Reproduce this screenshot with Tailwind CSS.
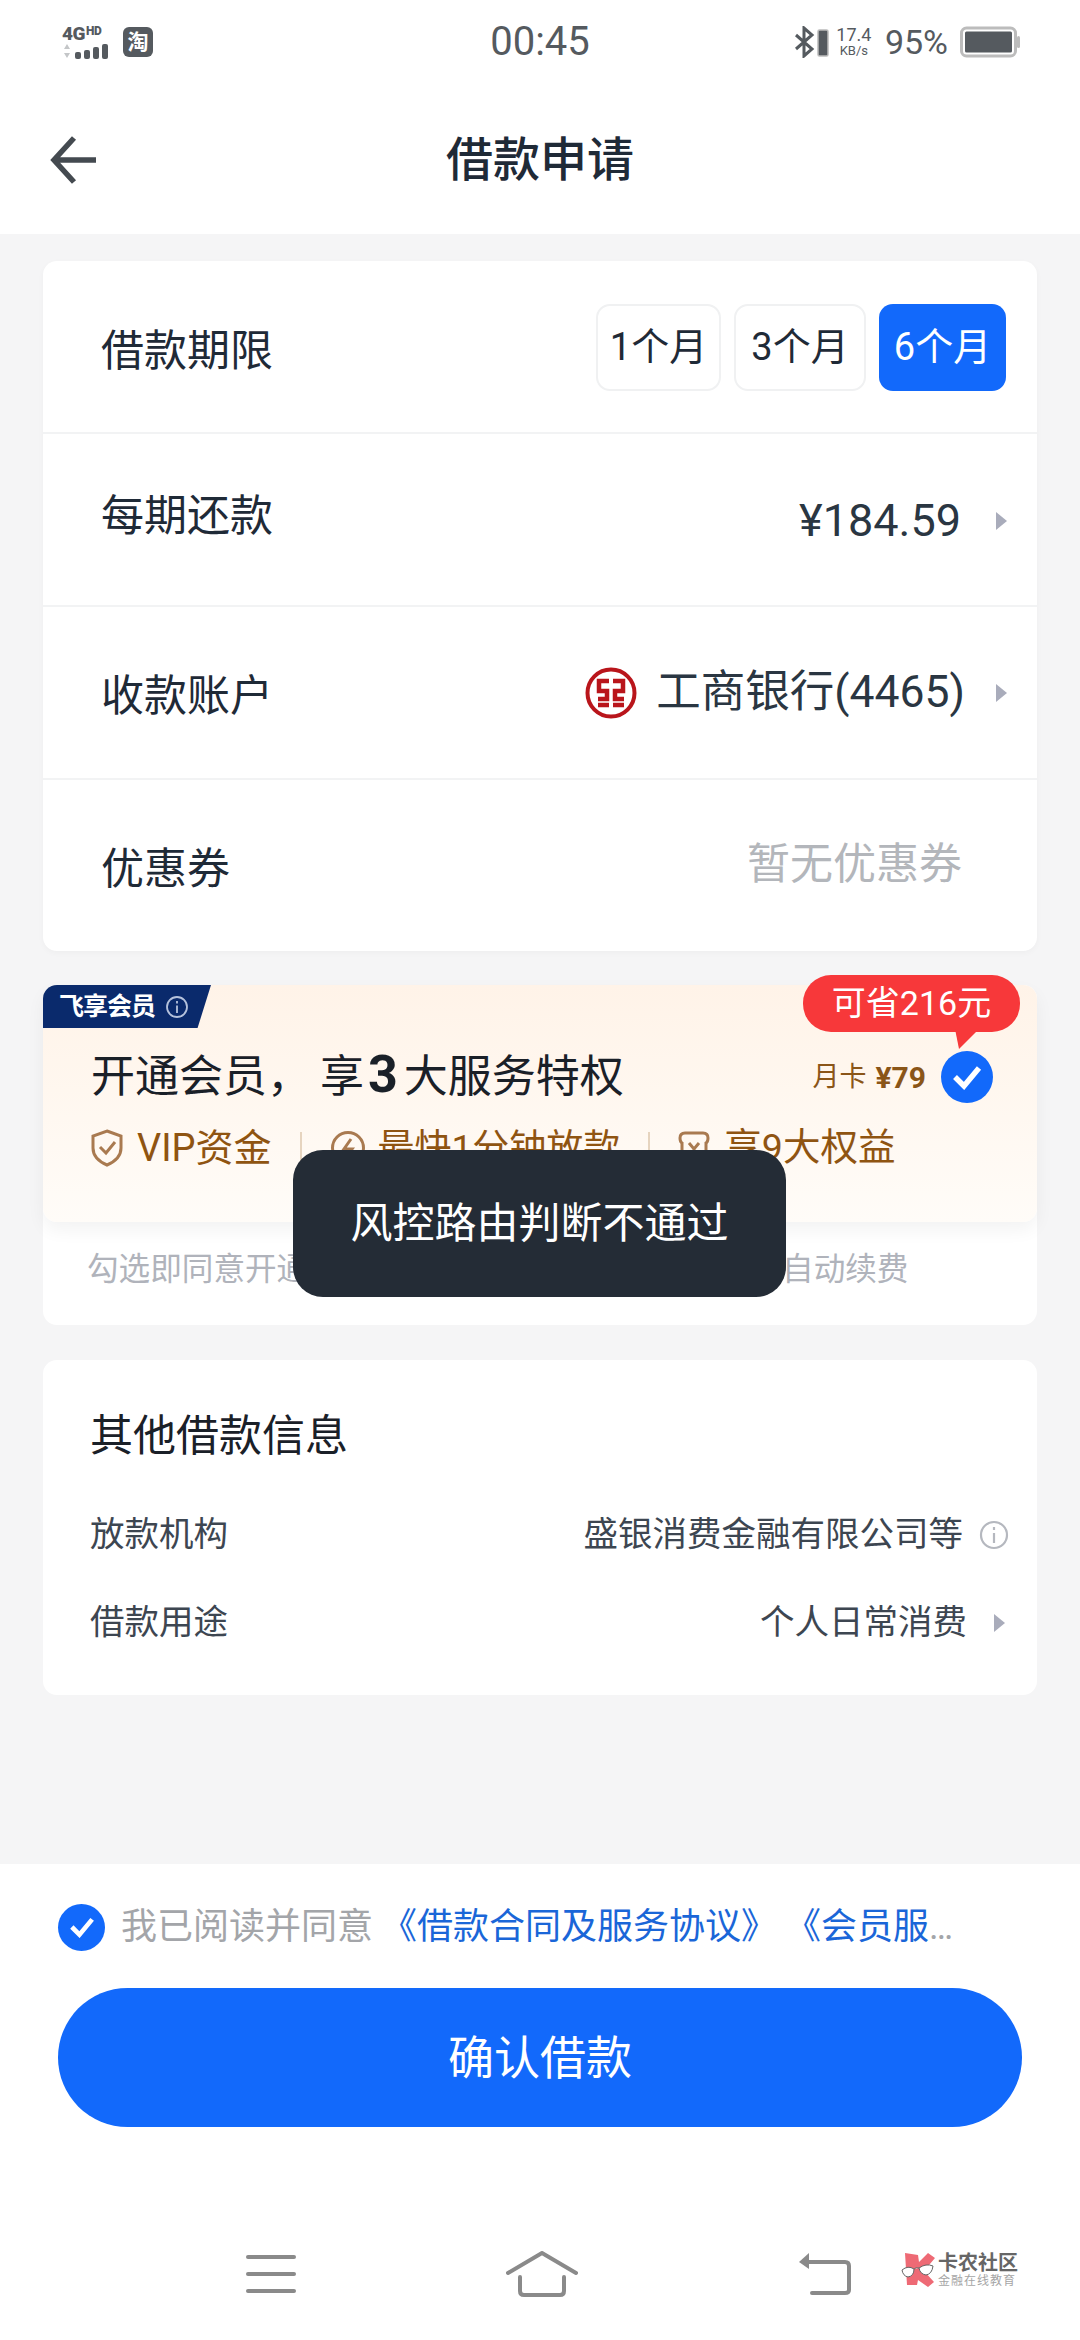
<!DOCTYPE html>
<html lang="zh-CN">
<head>
    <meta charset="UTF-8">
    <meta name="viewport" content="width=device-width, initial-scale=1.0">
    <title>借款申请</title>
    <script src="https://cdn.jsdelivr.net/npm/@tailwindcss/browser@4"></script>
</head>
<body class="bg-[#f5f5f6] font-['Roboto','Noto_Sans_CJK_SC',sans-serif]">
<div class="relative w-[1080px] h-[2340px] overflow-hidden flex flex-col">

    <!-- status bar -->
    <div class="h-[80px] bg-white relative flex items-center justify-between pl-[62px] pr-[58px] pt-[3px] text-[#555a5f] shrink-0">
        <div class="flex items-center gap-[11px]">
            <div class="w-[50px] flex flex-col leading-none">
                <span class="text-[19px] font-black tracking-[-0.5px] leading-[17px]">4G<span class="text-[12px] align-top leading-[12px] ml-[1px]">HD</span></span>
                <svg width="50" height="16" viewBox="0 0 50 16" class="mt-[1px]">
                    <path d="M2 6 L5 1 L8 6Z M2 10 L8 10 L5 15Z" fill="#c4c6c8"/>
                    <rect x="13" y="9" width="6" height="7" rx="2" fill="#555a5f"/>
                    <rect x="22" y="7" width="6" height="9" rx="2" fill="#555a5f"/>
                    <rect x="31" y="4" width="6" height="12" rx="2" fill="#555a5f"/>
                    <rect x="40" y="1" width="6" height="15" rx="2" fill="#555a5f"/>
                </svg>
            </div>
            <div class="w-[30px] h-[30px] rounded-[6px] bg-[#555a5f] text-white text-[21px] font-bold leading-[30px] text-center">淘</div>
        </div>
        <div class="absolute left-[480px] top-[20px] text-[40px] leading-[44px] w-[120px] text-center">00:45</div>
        <div class="flex items-center">
            <svg width="22" height="32" viewBox="0 0 22 32" fill="none" stroke="#555a5f" stroke-width="3"><path d="M2 9 L18 23 L10 30 V2 L18 9 L2 23"/></svg>
            <svg width="12" height="30" viewBox="0 0 12 30" class="ml-[1px]"><rect x="1" y="3" width="10" height="26" rx="1.5" fill="#555a5f" stroke="#bbb" stroke-width="1.5"/></svg>
            <div class="ml-[6px] w-[38px] text-[15px] leading-[15px] text-center"><div class="text-[18px] leading-[18px]">17.4</div><div class="text-[13px] leading-[14px]">KB/s</div></div>
            <span class="ml-[12px] text-[34px] leading-none">95%</span>
            <svg width="62" height="32" viewBox="0 0 62 32" class="ml-[12px]">
                <rect x="1.5" y="2" width="54" height="28" rx="5" fill="none" stroke="#bcbcbc" stroke-width="3"/>
                <rect x="5" y="5.5" width="47" height="21" rx="1.5" fill="#555a5f"/>
                <rect x="57" y="10" width="3" height="12" rx="1.5" fill="#bcbcbc"/>
            </svg>
        </div>
    </div>

    <!-- header -->
    <div class="h-[154px] bg-white relative flex items-center justify-center shrink-0 pt-[4px]">
        <svg width="48" height="48" viewBox="0 0 48 48" fill="none" stroke="#444a50" stroke-width="5.5" class="absolute left-[50px] top-[56px]">
            <path d="M46 24 H4 M24 2 L4 24 L24 46"/>
        </svg>
        <h1 class="text-[47px] font-medium text-[#1f2a37] leading-none">借款申请</h1>
    </div>

    <main class="px-[43px] pt-[27px] flex-1 flex flex-col">
        <!-- loan card -->
        <section class="bg-white rounded-[14px] h-[690px] flex flex-col shadow-[0_2px_6px_rgba(0,0,0,0.03)]">
            <div class="h-[173px] flex items-center justify-between pl-[58px] pr-[31px] border-b-2 border-[#f2f3f4]">
                <span class="text-[43px] text-[#1f2a37] pt-[10px]">借款期限</span>
                <div class="flex gap-[13px] pt-[2px]">
                    <div class="w-[125px] h-[87px] rounded-[14px] border-2 border-[#f0f1f2] text-[38px] text-[#1f2a37] flex items-center justify-center">1个月</div>
                    <div class="w-[132px] h-[87px] rounded-[14px] border-2 border-[#f0f1f2] text-[38px] text-[#1f2a37] flex items-center justify-center">3个月</div>
                    <div class="w-[127px] h-[87px] rounded-[14px] bg-[#1269fb] text-[38px] text-white flex items-center justify-center">6个月</div>
                </div>
            </div>
            <div class="h-[173px] flex items-center justify-between pl-[58px] pr-[30px] border-b-2 border-[#f2f3f4]">
                <span class="text-[43px] text-[#1f2a37] pb-[6px]">每期还款</span>
                <div class="flex items-center pt-[2px]">
                    <span class="text-[45px] text-[#2a3642]">¥184.59</span>
                    <svg width="12" height="18" viewBox="0 0 12 18" class="ml-[34px]"><path d="M1 0 L12 9 L1 18Z" fill="#a9acbb"/></svg>
                </div>
            </div>
            <div class="h-[173px] flex items-center justify-between pl-[58px] pr-[30px] border-b-2 border-[#f2f3f4]">
                <span class="text-[43px] text-[#1f2a37] pt-[8px]">收款账户</span>
                <div class="flex items-center">
                    <svg width="52" height="52" viewBox="0 0 52 52" class="mr-[19px]" fill="none" stroke="#b9151b">
                        <circle cx="26" cy="26" r="23.5" stroke-width="4"/>
                        <path d="M24 14 H14 V24 H22 V32 H13 M13 38 H24 M28 14 H38 V24 H30 V32 H39 M39 38 H28" stroke-width="4.5"/>
                    </svg>
                    <span class="text-[44.5px] text-[#2a3642]">工商银行(4465)</span>
                    <svg width="12" height="18" viewBox="0 0 12 18" class="ml-[30px]"><path d="M1 0 L12 9 L1 18Z" fill="#a9acbb"/></svg>
                </div>
            </div>
            <div class="flex-1 flex items-center justify-between pl-[58px] pr-[75px]">
                <span class="text-[43px] text-[#1f2a37] pt-[8px]">优惠券</span>
                <span class="text-[43px] text-[#b3b6bb] pb-[2px]">暂无优惠券</span>
            </div>
        </section>

        <!-- membership card -->
        <section class="mt-[34px] bg-white rounded-[14px] h-[340px] relative">
            <div class="h-[237px] rounded-[14px] bg-gradient-to-b from-[#fff3e8] to-[#fffcf8] shadow-[0_8px_18px_rgba(0,0,0,0.05)] pl-[48px] pr-[44px] pt-[60px] relative">
                <div class="absolute left-0 top-0 w-[168px] h-[43px] bg-[#0a2a6c] rounded-tl-[14px] [clip-path:polygon(0_0,100%_0,92%_100%,0_100%)] flex items-center pl-[16px] gap-[10px]">
                    <span class="text-[25px] font-bold text-white tracking-[-1px] leading-none">飞享会员</span>
                    <svg width="24" height="24" viewBox="0 0 24 24" fill="none" stroke="#b5c2dc" stroke-width="1.8"><circle cx="12" cy="12" r="10"/><path d="M12 10.5 V18 M12 6 V8.5"/></svg>
                </div>
                <div class="flex items-center justify-between h-[60px]">
                    <div class="text-[44px] text-[#1a2028] leading-none">开通会员，<span class="ml-[9px]">享</span><span class="font-bold text-[52px] ml-[4px] mr-[6px]">3</span>大服务特权</div>
                    <div class="flex items-center pt-[4px]">
                        <span class="text-[27px] text-[#8a5518]">月卡</span>
                        <span class="text-[30px] font-bold text-[#8a5518] ml-[9px]">¥79</span>
                        <span class="ml-[15px] w-[52px] h-[52px] rounded-full bg-[#1269fb] flex items-center justify-center">
                            <svg width="30" height="26" viewBox="0 0 30 26" fill="none" stroke="white" stroke-width="5.5"><path d="M3 13 L12 22 L27 4"/></svg>
                        </span>
                    </div>
                </div>
                <div class="flex items-center mt-[24px] text-[38px] text-[#8f5411] leading-none">
                    <svg width="32" height="38" viewBox="0 0 32 38" fill="none" stroke="#a97a50" stroke-width="3"><path d="M16 2 L30 7 V19 C30 28 23 33 16 36 C9 33 2 28 2 19 V7Z"/><path d="M9 18 L15 24 L24 13"/></svg>
                    <span class="ml-[14px]">VIP资金</span>
                    <span class="w-[2px] h-[32px] bg-[#e6d4bf] mx-[28px]"></span>
                    <svg width="36" height="36" viewBox="0 0 36 36" fill="none" stroke="#a97a50" stroke-width="3"><circle cx="18" cy="18" r="15.5"/><path d="M21 9 L14 19 H22 L15 28"/></svg>
                    <span class="ml-[12px] text-[37px]">最快1分钟放款</span>
                    <span class="w-[2px] h-[32px] bg-[#e6d4bf] mx-[28px]"></span>
                    <svg width="32" height="36" viewBox="0 0 32 36" fill="none" stroke="#a97a50" stroke-width="3"><path d="M7 3 H25 Q30 3 30 8 Q30 12 28 13 V33 H4 V13 Q2 12 2 8 Q2 3 7 3Z"/><path d="M11 13 L16 19 L21 13 M16 19 V28 M11 22 H21"/></svg>
                    <span class="ml-[14px] text-[37.5px]">享9大权益</span>
                </div>
            </div>
            <p class="text-[31.6px] text-[#b0b3bb] pl-[44px] pt-[26px] leading-[44px] whitespace-nowrap">勾选即同意开通飞享会员，到期自动续费，到期后自动续费</p>
            <!-- savings bubble -->
            <div class="absolute left-[760px] top-[-10px] w-[217px] h-[57px] rounded-[28px] bg-[#f7383a] text-white text-[34px] leading-[57px] text-center">可省216元</div>
            <svg width="24" height="22" viewBox="0 0 24 22" class="absolute left-[912px] top-[44px]"><path d="M0 0 H24 L4 20Z" fill="#f7383a"/></svg>
        </section>

        <!-- other info -->
        <section class="mt-[35px] bg-white rounded-[14px] h-[335px] pt-[46px] pl-[47px] pr-[28px]">
            <h2 class="text-[43px] text-[#1a2028] leading-[60px]">其他借款信息</h2>
            <div class="flex items-center justify-between mt-[44px] h-[50px]">
                <span class="text-[34.5px] text-[#3d4651]">放款机构</span>
                <div class="flex items-center">
                    <span class="text-[34.5px] text-[#3d4651]">盛银消费金融有限公司等</span>
                    <svg width="30" height="30" viewBox="0 0 30 30" fill="none" stroke="#b5b8bf" stroke-width="2.2" class="ml-[16px]"><circle cx="15" cy="15" r="13"/><path d="M15 13 V23 M15 7 V10"/></svg>
                </div>
            </div>
            <div class="flex items-center justify-between mt-[38px] h-[50px]">
                <span class="text-[34.5px] text-[#3d4651]">借款用途</span>
                <div class="flex items-center pr-[4px]">
                    <span class="text-[34.5px] text-[#3d4651]">个人日常消费</span>
                    <svg width="12" height="18" viewBox="0 0 12 18" class="ml-[26px]"><path d="M1 0 L12 9 L1 18Z" fill="#a9acbb"/></svg>
                </div>
            </div>
        </section>
    </main>

    <!-- bottom action area -->
    <div class="h-[476px] bg-white shrink-0 flex flex-col px-[58px] pt-[38px]">
        <div class="flex items-center h-[50px] whitespace-nowrap">
            <span class="w-[47px] h-[47px] rounded-full bg-[#1269fb] flex items-center justify-center shrink-0">
                <svg width="26" height="22" viewBox="0 0 30 26" fill="none" stroke="white" stroke-width="5.5"><path d="M3 13 L12 22 L27 4"/></svg>
            </span>
            <span class="ml-[16px] text-[36px] text-[#a3a5a9]">我已阅读并同意</span>
            <span class="ml-[8px] text-[36px] text-[#1a66d8]">《借款合同及服务协议》</span>
            <span class="ml-[8px] text-[36px] text-[#1a66d8]">《会员服</span>
            <span class="text-[36px] text-[#a3a5a9]">…</span>
        </div>
        <button class="mt-[36px] h-[139px] w-[964px] rounded-full bg-[#1269fb] text-white text-[46px] pt-[1px]">确认借款</button>
        <!-- nav bar -->
        <div class="mt-[122px] h-[50px] flex items-center relative">
            <svg width="50" height="40" viewBox="0 0 50 40" class="ml-[188px]" fill="#8a8a8a">
                <rect y="1" width="50" height="4" rx="2"/><rect y="18" width="50" height="4" rx="2"/><rect y="35" width="50" height="4" rx="2"/>
            </svg>
            <svg width="72" height="46" viewBox="0 0 72 46" class="ml-[210px]" fill="none" stroke="#8a8a8a" stroke-width="4" stroke-linecap="round" stroke-linejoin="round">
                <path d="M2 22 L36 2 L70 22 M14 26 V40 Q14 44 18 44 H54 Q58 44 58 40 V26"/>
            </svg>
            <svg width="54" height="44" viewBox="0 0 54 44" class="ml-[220px]" fill="none" stroke="#8a8a8a" stroke-width="4" stroke-linecap="round">
                <path d="M8 10 H47 Q51 10 51 14 V38 Q51 41 47 41 H14"/><path d="M1 10 L11 1 V17Z" fill="#8a8a8a" stroke="none"/>
            </svg>
        </div>
    </div>

    <!-- watermark -->
    <div class="absolute left-[900px] top-[2252px] flex items-center">
        <svg width="36" height="36" viewBox="0 0 36 36">
            <path d="M5 1 L18 3 L19 10 L28 1 L35 6 L24 19 L34 30 L28 35 L18 28 L17 33 L7 33Z" fill="#ee6a75"/>
            <path d="M2 18 Q8 13 14 17 Q14 24 8 25 Q3 24 2 18Z M19 16 Q26 11 33 14 Q32 22 26 23 Q20 22 19 16Z M14 17 Q16 15 19 16" fill="white" stroke="#666" stroke-width="1"/>
        </svg>
        <div class="ml-[2px] leading-none">
            <div class="text-[20px] font-bold text-[#666] leading-[21px]">卡农社区</div>
            <div class="text-[12px] text-[#a5a5a5] leading-[14px] tracking-[1px]">金融在线教育</div>
        </div>
    </div>

    <!-- toast -->
    <div class="absolute left-[293px] top-[1150px] w-[493px] h-[147px] rounded-[30px] bg-[#242c36] text-white text-[42px] flex items-center justify-center">风控路由判断不通过</div>
</div>
</body>
</html>
